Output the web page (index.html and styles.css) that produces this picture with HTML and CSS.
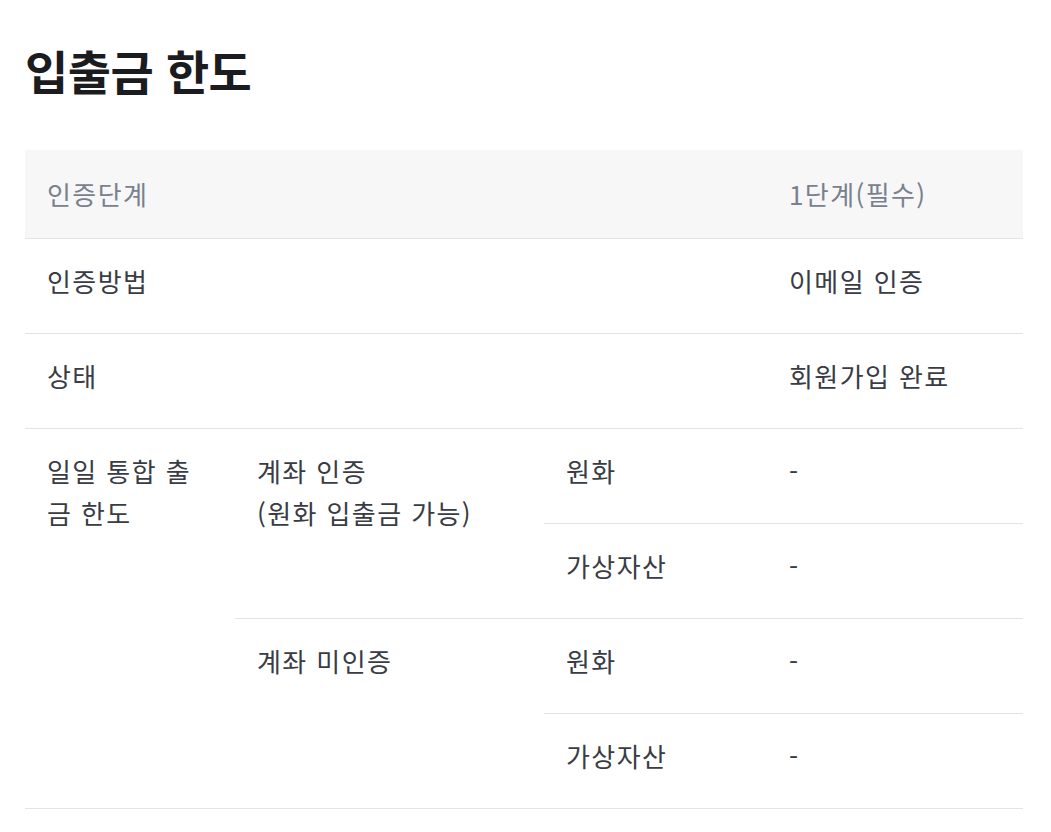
FILE: index.html
```html
<!DOCTYPE html>
<html lang="ko">
<head>
<meta charset="utf-8">
<title>입출금 한도</title>
<link rel="stylesheet" href="styles.css">
</head>
<body>
<main class="page">
  <h1 class="title">입출금 한도</h1>
  <table class="limits">
    <colgroup>
      <col class="c1"><col class="c2"><col class="c3"><col class="c4">
    </colgroup>
    <thead>
      <tr>
        <th colspan="3">인증단계</th>
        <th>1단계(필수)</th>
      </tr>
    </thead>
    <tbody>
      <tr>
        <td colspan="3">인증방법</td>
        <td>이메일 인증</td>
      </tr>
      <tr>
        <td colspan="3">상태</td>
        <td>회원가입 완료</td>
      </tr>
      <tr>
        <td rowspan="4" class="wrap">일일 통합 출금 한도</td>
        <td rowspan="2">계좌 인증<br>(원화 입출금 가능)</td>
        <td>원화</td>
        <td>-</td>
      </tr>
      <tr>
        <td>가상자산</td>
        <td>-</td>
      </tr>
      <tr>
        <td rowspan="2">계좌 미인증</td>
        <td>원화</td>
        <td>-</td>
      </tr>
      <tr>
        <td>가상자산</td>
        <td>-</td>
      </tr>
    </tbody>
  </table>
</main>
</body>
</html>
```
FILE: styles.css
```css
html, body {
  margin: 0;
  padding: 0;
  background: #ffffff;
}

body {
  font-family: "Noto Sans CJK KR", "Noto Sans", sans-serif;
  color: #393c44;
}

.page {
  padding: 38px 28px 0 25px;
}

.title {
  margin: 0 0 48px 0;
  font-size: 47px;
  line-height: 64px;
  font-weight: 700;
  letter-spacing: -0.5px;
  color: #1b1c20;
}

.limits {
  width: 100%;
  border-collapse: collapse;
  table-layout: fixed;
  font-size: 26px;
  line-height: 42px;
  letter-spacing: 1.4px;
}

.c1 { width: 210px; }
.c2 { width: 309px; }
.c3 { width: 223px; }
.c4 { width: auto; }

.limits th,
.limits td {
  text-align: left;
  vertical-align: top;
  border-bottom: 1px solid #e4e4e6;
  padding: 21px 22px 31px 22px;
  font-weight: 400;
}

.limits thead th {
  background: #f7f7f8;
  color: #7a818d;
  padding: 23px 22px;
}

.limits td.wrap {
  padding-right: 30px;
}
```
